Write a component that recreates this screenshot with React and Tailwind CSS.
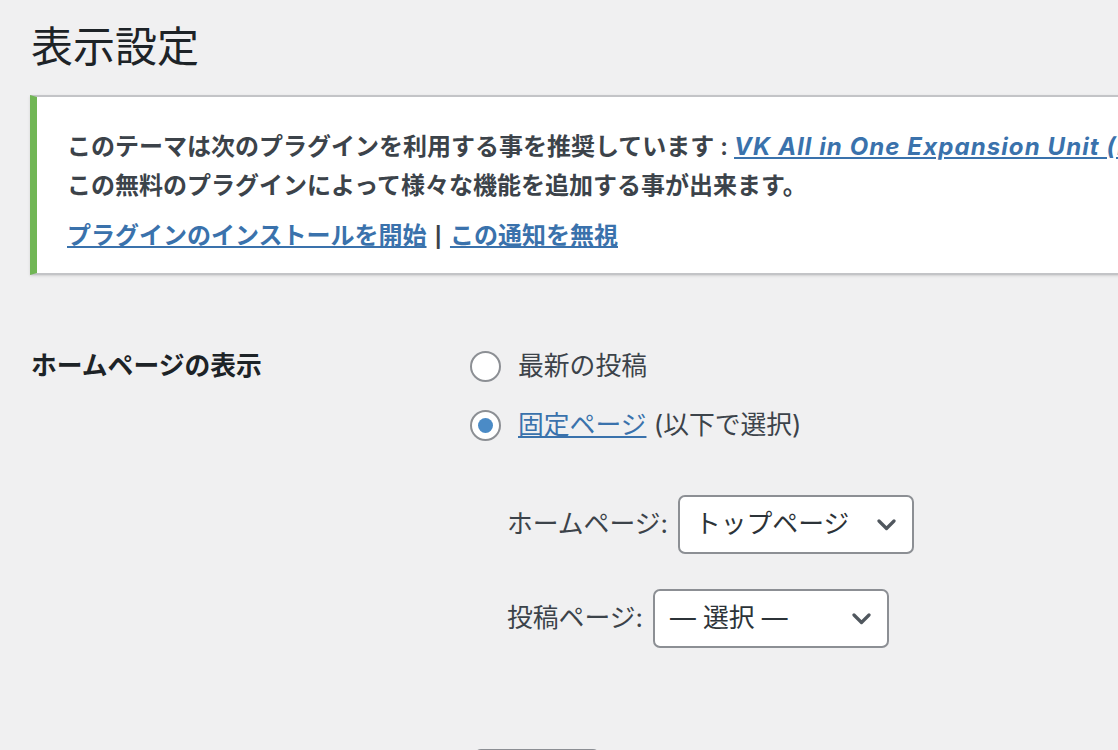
import React, { useState } from 'react';

const font = { fontFamily: 'Inter, "Noto Sans CJK JP", sans-serif' };

function Radio({ checked, onChange, children }) {
  return (
    <label className="flex items-center h-[59px] cursor-pointer" onClick={onChange}>
      <span className="w-[31px] h-[31px] rounded-full border-2 border-[#8c8f94] bg-white flex items-center justify-center shrink-0">
        {checked && <span className="w-[15px] h-[15px] rounded-full bg-[#4b8bc6]" />}
      </span>
      <span className="ml-[17px] text-[25.8px] text-[#3c434a]">{children}</span>
    </label>
  );
}

function Select({ width, value }) {
  return (
    <div
      className="h-[59px] rounded-[7px] border-2 border-[#8c8f94] bg-white flex items-center justify-between pl-[15px] pr-[16px] text-[25.8px] text-[#2c3338]"
      style={{ width }}
    >
      <span>{value}</span>
      <svg width="19" height="12" viewBox="0 0 19 12" fill="none">
        <path d="M2 2 L9.5 9.5 L17 2" stroke="#50575e" strokeWidth="3.2" strokeLinecap="round" strokeLinejoin="round" />
      </svg>
    </div>
  );
}

export default function App() {
  const [front, setFront] = useState('page');

  return (
    <div style={font} className="w-[1118px] h-[750px] overflow-hidden bg-[#f0f0f1] text-[#3c434a]">
      {/* タイトル */}
      <h1 className="pl-[31px] pt-[22px] text-[42px] leading-[50px] text-[#1d2327] font-normal">表示設定</h1>

      {/* 推奨プラグインの通知 */}
      <div className="ml-[30px] mt-[23px] w-[1300px] bg-white border-y-2 border-[#c3c4c7] border-l-[7px] border-l-[#71b655] pl-[30px] pt-[30px] pb-[16px] shadow-sm">
        <p className="text-[24px] leading-[39px] font-semibold whitespace-nowrap">
          このテーマは次のプラグインを利用する事を推奨しています :{' '}
          <a href="#" className="text-[#3a72ac] underline italic font-bold tracking-[1.1px]">VK All in One Expansion Unit (Free)</a>
          <br />
          この無料のプラグインによって様々な機能を追加する事が出来ます。
        </p>
        <p className="mt-[11px] text-[24px] leading-[39px] font-semibold whitespace-nowrap">
          <a href="#" className="text-[#3a72ac] underline">プラグインのインストールを開始</a>
          <span className="mx-[8px] font-bold text-[20px]">|</span>
          <a href="#" className="text-[#3a72ac] underline">この通知を無視</a>
        </p>
      </div>

      {/* フォーム */}
      <div className="flex pl-[31px] mt-[62px]">
        <div className="w-[439px] shrink-0 pt-[14px] text-[25.8px] leading-[30px] font-semibold text-[#1d2327]">
          ホームページの表示
        </div>
        <div className="flex flex-col">
          <Radio checked={front === 'posts'} onChange={() => setFront('posts')}>最新の投稿</Radio>
          <Radio checked={front === 'page'} onChange={() => setFront('page')}>
            <a href="#" className="text-[#3a72ac] underline">固定ページ</a> (以下で選択)
          </Radio>

          <div className="pl-[37px] mt-[40px] flex flex-col gap-[35px]">
            <div className="flex items-center gap-[10px]">
              <span className="text-[25.8px] text-[#3c434a]">ホームページ:</span>
              <Select width={236} value="トップページ" />
            </div>
            <div className="flex items-center gap-[10px]">
              <span className="text-[25.8px] text-[#3c434a]">投稿ページ:</span>
              <Select width={236} value="— 選択 —" />
            </div>
          </div>
        </div>
      </div>

      <div className="pl-[474px] mt-[101px]">
        <button className="w-[126px] h-[56px] rounded-[7px] border-2 border-[#8c8f94] bg-[#f6f7f7]" />
      </div>
    </div>
  );
}
